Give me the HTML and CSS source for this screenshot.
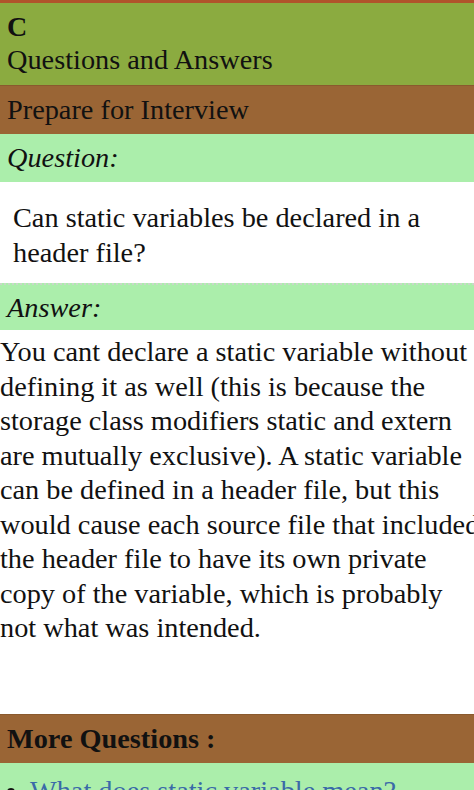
FILE: index.html
```html
<!DOCTYPE html>
<html>
<head>
<meta charset="utf-8">
<link rel="stylesheet" href="styles.css">
</head>
<body>
<div class="page">
  <header class="app-header">
    <div class="app-title">C</div>
    <div class="app-sub">Questions and Answers</div>
  </header>
  <div class="bar brown">Prepare for Interview</div>
  <div class="bar label">Question:</div>
  <div class="question">Can static variables be declared in a header file?</div>
  <div class="bar label answer-label">Answer:</div>
  <div class="answer">You cant declare a static variable without<br>defining it as well (this is because the<br>storage class modifiers static and extern<br>are mutually exclusive). A static variable<br>can be defined in a header file, but this<br>would cause each source file that included<br>the header file to have its own private<br>copy of the variable, which is probably<br>not what was intended.</div>
  <div class="bar brown more">More Questions :</div>
  <ul class="more-list">
    <li><a href="#">What does static variable mean?</a></li>
  </ul>
</div>
</body>
</html>
```
FILE: styles.css
```css
html, body {
  margin: 0;
  padding: 0;
  background: #ffffff;
}
body {
  font-family: "Liberation Serif", "Times New Roman", serif;
  color: #111111;
  width: 474px;
  height: 790px;
  overflow: hidden;
}
.page {
  border-top: 3px solid #b0532b;
  width: 474px;
  overflow: hidden;
}
.app-header {
  background: #8bab40;
  padding: 8px 7px 8px;
  height: 66px;
}
.app-title {
  font-weight: bold;
  font-size: 28px;
  line-height: 32px;
}
.app-sub {
  font-size: 28.3px;
  line-height: 34px;
}
.bar {
  font-size: 28.3px;
  line-height: 48px;
  padding: 0 7px;
}
.brown {
  background: #9a6535;
  border-top: 1px solid #8a5a2e;
}
.label {
  background: #abeeab;
  font-style: italic;
}
.question {
  font-size: 28.3px;
  line-height: 35px;
  padding: 18px 13px 13px;
}
.answer-label {
  border-top: 2px dotted #c8d8c8;
  line-height: 45px;
}
.answer {
  font-size: 28.3px;
  line-height: 34.5px;
  padding: 5px 0 0;
  height: 379px;
  width: 560px;
}
.more {
  font-weight: bold;
}
.more-list {
  margin: 0;
  background: #abeeab;
  padding: 11px 0 20px 30px;
  font-size: 28.3px;
  line-height: 34px;
}
.more-list a {
  color: #3a6aa8;
  text-decoration: none;
}
```
